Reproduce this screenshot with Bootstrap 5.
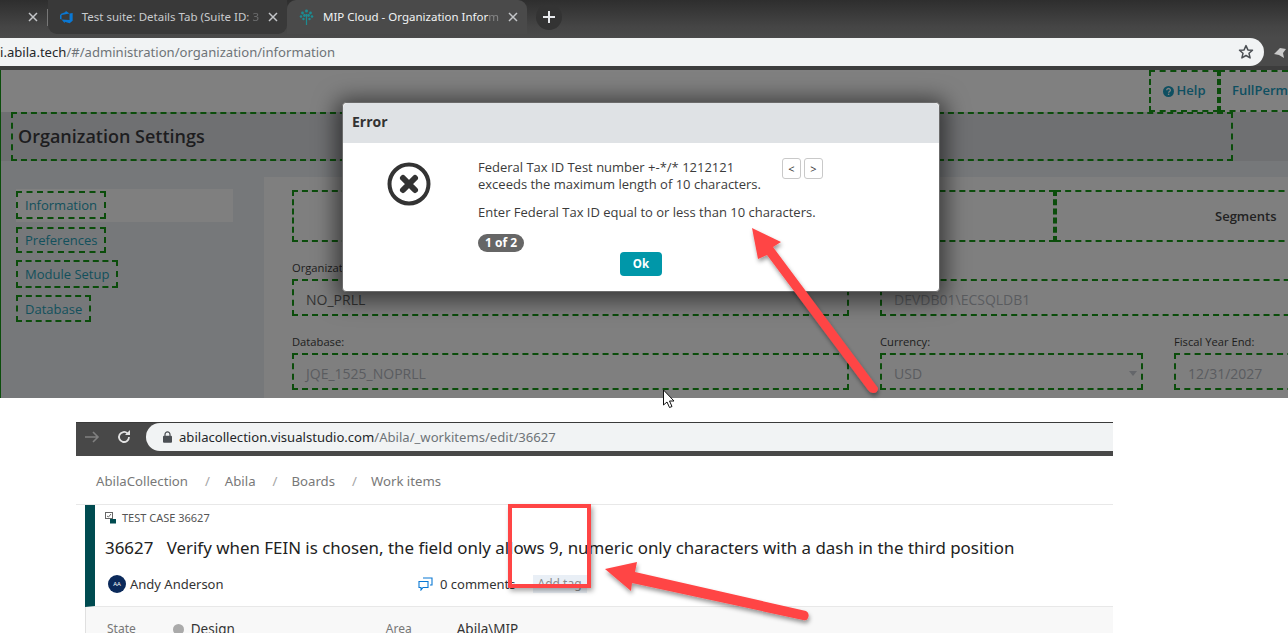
<!DOCTYPE html>
<html lang="en">
<head>
<meta charset="utf-8">
<title>Composite screenshot</title>
<link href="https://cdn.jsdelivr.net/npm/bootstrap@5.3.0/dist/css/bootstrap.min.css" rel="stylesheet">
<style>
html,body{margin:0;background:#fff;width:1288px;height:633px;overflow:hidden}
body{position:relative;font-family:"Open Sans",sans-serif}
.tabstrip{height:38px;background:linear-gradient(#2e2e2e,#454545 70%,#4a4a4a);color:#e8eaed;font:11.5px/1 "Noto Sans",sans-serif}
.tabone{width:48px;height:34px}
.tabtwo{width:239px;height:34px;background:#393939;border-radius:0 0 9px 9px;padding:0 9px 0 12px;gap:9px;color:#c9cbce}
.tabthree{width:240px;height:34px;background:#4a4a4a;border-radius:9px 9px 0 0;padding:0 9px 0 12px;gap:9px;color:#f1f3f4}
.tabtext{flex:1;white-space:nowrap}
.fadechar{opacity:.35}
.closex{width:10px;height:10px;flex:none}
.tabsep{width:1px;height:17px;background:#777;margin-left:auto}
.plusbtn{width:26px;height:26px;border-radius:50%;background:#333;margin-left:9px;flex:none}
.urlrow{height:32px;background:linear-gradient(#4a4a4a 28px,#3d3d3d 28px)}
.urlbar{height:28px;width:1264px;background:#f1f3f4;border-radius:0 14px 14px 0;font:13.1px/28px "Noto Sans",sans-serif;color:#6e7378;white-space:nowrap}
.urlbar b,.url2 b{font-weight:400;color:#24272a}
.starico{width:16px;height:16px;margin-right:10px;flex:none}
.extico{width:14px;height:14px;margin-left:9px;flex:none}
.appwin{height:328px;width:1288px;overflow:hidden;background:#76787a;border-left:1px solid #0b4d0b;color:#222;position:relative}
.bandtop{height:42px;background:#808080}
.bandtitle{height:49px;background:#6f7072;padding-left:10px}
.dash{border:2px dashed #0b4d0b}
.helpbox{width:70px;height:42px;color:#0e4f61;font-size:13px;font-weight:600;gap:3px;flex:none}
.permbox{width:69px;height:42px;color:#0e4f61;font-size:13px;font-weight:600;padding-left:11px;flex:none;border-right:0;white-space:nowrap}
.titlebox{width:1222px;height:49px;font-size:18px;font-weight:600;color:#1d1d1f;padding-left:5px;flex:none}
.sidecol{width:263px;flex:none;padding:28px 0 0 15px}
.sidelink{display:flex;align-items:center;font-size:13px;color:#12505c;padding:2px 0 0 7px;text-decoration:none}
.siderow{width:217px;height:33px;background:#7f7f7f;padding-top:2px;margin-bottom:5px}
.sideplain{margin-bottom:7px}
.panelbox{width:1060px;flex:none;height:240px;margin-top:16px;background:#7f7f7f;padding:13px 0 0 28px}
.paneltabs{height:52px}
.ptab{height:52px;font-size:13px;font-weight:600;color:#222;flex:none;padding-top:1px}
.fieldlabel{font-size:11.2px;line-height:14px;color:#1d1d1d;height:14px;white-space:nowrap}
.fieldbox{height:37px;padding:3px 0 0 12px;font-size:14px;color:#333;white-space:nowrap;flex:none;margin-top:4px}
.dim{color:#5a5c5f}
.rowgap{gap:31px}
.modalcard{position:absolute;left:342px;top:102px;width:598px;height:190px;border:1px solid #6b6b6b;border-radius:4px;box-shadow:0 3px 22px 6px rgba(0,0,0,.55);overflow:hidden;background:#fff;color:#3c3c3c}
.modalhead{height:40px;background:#dfe2e5;border:0;border-radius:0;padding:0 9px;font-size:14px;font-weight:700;line-height:38px;color:#333}
.modaltxt{font-size:13px;line-height:17px;white-space:nowrap;color:#3b3b3b}
.modalicon{width:135px;padding:19px 0 0 44px;flex:none}
.pager{width:19px;height:21px;border:1px solid #c9c9c9;border-radius:3px;font-size:11px;line-height:17px;text-align:center;color:#333;background:#fff;padding:0}
.countpill{background:#666;color:#fff;font-size:12px;font-weight:700;width:46px;height:18px;line-height:18px;padding:0;border-radius:9px}
.okbtn{width:42px;height:24px;background:#0097a9;border:0;border-radius:4px;color:#fff;font-size:11.5px;font-weight:700;padding:0;line-height:24px}
.strip2{margin:24px 0 0 76px;width:1037px;height:34px;background:#484848;border-top:1px solid #3a3a3a}
.navicons{width:70px;flex:none;height:28px}
.url2{flex:1;height:28px;background:#f1f3f4;border-radius:14px 0 0 14px;font:13.1px/28px "Noto Sans",sans-serif;color:#6e7378;padding-left:17px;gap:7px}
.crumbs{margin:0 0 0 96px;height:48px;padding-top:2px;font:13.2px "Noto Sans",sans-serif;color:#787878;width:1017px}
.crumbs .sepmark{color:#a5a5a5}
.itemwrap{margin-left:76px;width:1037px;border-top:1px solid #e8e8e8}
.itemhead{height:102px;margin-left:9px;border-left:10px solid #004b50;position:relative;padding-left:10px;border-bottom:1px solid #e8e8e8}
.casetype{font:11px/14px "Noto Sans",sans-serif;color:#555;padding-top:6px;gap:5px}
.itemtitle{font:16.9px/24px "Noto Sans",sans-serif;color:#222;margin-top:11px;white-space:nowrap}
.itemtitle span{margin-right:9px}
.authorrow{font:13px/18px "Noto Sans",sans-serif;color:#333;margin-top:15px;padding-left:3px;white-space:nowrap}
.avatar{width:18px;height:18px;border-radius:50%;background:#0b2a5b;color:#fff;font-size:6px;line-height:18px;text-align:center;margin-right:4px;flex:none}
.commentico{margin-left:193px;margin-right:7px;flex:none}
.addtag{background:#e9eff6;color:#8a8a8a;font-size:12px;line-height:18px;padding:0 5px;margin-left:17px;width:54px;white-space:nowrap}
.detailrow{height:30px;margin-left:9px;background:#f8f8f8;border-left:1px solid #e0e0e0;font:13.5px/18px "Noto Sans",sans-serif;color:#333;padding:13px 0 0 21px;position:relative}
.detaillabel{font-size:12px;color:#777}
.statedot{width:11px;height:11px;border-radius:50%;background:#aaa;margin:0 7px 0 37px;flex:none}
.overlayart{position:absolute;left:0;top:0;pointer-events:none}
.redframe{position:absolute;left:508px;top:504px;width:83px;height:84px;border:4px solid #ff4545;box-shadow:2px 3px 5px rgba(0,0,0,.35)}
</style>
</head>
<body>

<div class="tabstrip d-flex align-items-start">
  <div class="tabone d-flex align-items-center">
    <svg class="closex" style="margin-left:28px" viewBox="0 0 10 10"><path d="M1 1l8 8M9 1l-8 8" stroke="#c4c6c9" stroke-width="1.5"/></svg>
    <span class="tabsep"></span>
  </div>
  <div class="tabtwo d-flex align-items-center">
    <svg width="16" height="16" viewBox="0 0 24 24" class="flex-none"><path fill="#0a78d4" d="M0 8.877L2.247 5.91l8.405-3.416V.022l7.37 5.393L2.966 8.338v8.225L0 15.707zm24-4.45v14.651l-5.753 4.9-9.303-3.057v3.056l-5.978-7.416 15.057 1.184V5.415z"/></svg>
    <span class="tabtext">Test suite: Details Tab (Suite ID: <span class="fadechar">3</span></span>
    <svg class="closex" viewBox="0 0 10 10"><path d="M1 1l8 8M9 1l-8 8" stroke="#c4c6c9" stroke-width="1.5"/></svg>
  </div>
  <div class="tabthree d-flex align-items-center">
    <svg width="15" height="18" viewBox="0 0 15 18"><g fill="#1c8c92"><circle cx="7.5" cy="3" r="1.5"/><circle cx="3.5" cy="5" r="1.4"/><circle cx="11.5" cy="5" r="1.4"/><circle cx="2" cy="8.5" r="1.3"/><circle cx="13" cy="8.5" r="1.3"/><circle cx="5.5" cy="7.5" r="1.4"/><circle cx="9.5" cy="7.5" r="1.4"/><circle cx="4.5" cy="11" r="1.2"/><circle cx="10.5" cy="11" r="1.2"/></g><path d="M7.5 6v11" stroke="#1c8c92" stroke-width="1.2"/></svg>
    <span class="tabtext">MIP Cloud - Organization Infor<span class="fadechar">m</span></span>
    <svg class="closex" viewBox="0 0 10 10"><path d="M1 1l8 8M9 1l-8 8" stroke="#c4c6c9" stroke-width="1.5"/></svg>
  </div>
  <div class="plusbtn d-flex align-items-center justify-content-center mt-1">
    <svg width="12" height="12" viewBox="0 0 12 12"><path d="M6 0v12M0 6h12" stroke="#e8eaed" stroke-width="2"/></svg>
  </div>
</div>

<div class="urlrow d-flex">
  <div class="urlbar d-flex align-items-center justify-content-between"><span><b>i.abila.tech</b>/#/administration/organization/information</span>
    <svg class="starico" viewBox="0 0 16 16"><path d="M8 1.6l1.9 4.3 4.6.4-3.5 3 1.1 4.6L8 11.5l-4.1 2.4L5 9.3l-3.5-3 4.6-.4z" fill="none" stroke="#4b4f54" stroke-width="1.5" stroke-linejoin="round"/></svg>
  </div>
  <svg class="extico mt-2" viewBox="0 0 14 14"><path d="M1 8l6-6 6 1-3 4 1 5-5-3z" fill="#c9c9c9"/></svg>
</div>

<div class="appwin">
  <div class="bandtop d-flex justify-content-end">
    <div class="dash helpbox d-flex align-items-center justify-content-center">
      <svg width="11" height="11" viewBox="0 0 11 11"><circle cx="5.5" cy="5.5" r="5.5" fill="#0e4f61"/><path d="M3.7 4.2c0-2.3 3.7-2.3 3.7 0 0 1.3-1.8 1.2-1.8 2.5" fill="none" stroke="#808080" stroke-width="1.3"/><rect x="4.9" y="7.6" width="1.4" height="1.4" fill="#808080"/></svg>
      <span>Help</span>
    </div>
    <div class="dash permbox d-flex align-items-center">FullPerm</div>
  </div>
  <div class="bandtitle">
    <div class="dash titlebox d-flex align-items-center">Organization Settings</div>
  </div>
  <div class="d-flex">
    <nav class="sidecol">
      <div class="siderow"><a class="sidelink dash" style="width:90px;height:28px" href="#">Information</a></div>
      <a class="sidelink dash sideplain" style="width:90px;height:26px" href="#">Preferences</a>
      <a class="sidelink dash sideplain" style="width:102px;height:28px" href="#">Module Setup</a>
      <a class="sidelink dash" style="width:75px;height:27px" href="#">Database</a>
    </nav>
    <section class="panelbox">
      <div class="paneltabs d-flex">
        <div class="dash ptab" style="width:763px"></div>
        <div class="dash ptab d-flex align-items-center" style="width:260px;padding-left:158px">Segments</div>
      </div>
      <div class="fieldlabel" style="margin-top:19px">Organization Name:</div>
      <div class="d-flex rowgap">
        <div class="dash fieldbox d-flex align-items-center" style="width:557px">NO_PRLL</div>
        <div class="dash fieldbox d-flex align-items-center dim" style="width:440px">DEVDB01\ECSQLDB1</div>
      </div>
      <div class="d-flex rowgap" style="margin-top:19px">
        <div style="width:557px" class="flex-none">
          <div class="fieldlabel">Database:</div>
          <div class="dash fieldbox d-flex align-items-center dim">JQE_1525_NOPRLL</div>
        </div>
        <div style="width:263px" class="flex-none">
          <div class="fieldlabel">Currency:</div>
          <div class="dash fieldbox d-flex align-items-center justify-content-between dim"><span>USD</span><svg width="8" height="5" class="me-1" viewBox="0 0 8 5"><path d="M0 0h8L4 5z" fill="#64666a"/></svg></div>
        </div>
        <div style="width:140px" class="flex-none">
          <div class="fieldlabel">Fiscal Year End:</div>
          <div class="dash fieldbox d-flex align-items-center dim">12/31/2027</div>
        </div>
      </div>
    </section>
  </div>
</div>

<div class="card modalcard">
  <div class="card-header modalhead">Error</div>
  <div class="d-flex">
    <div class="modalicon">
      <svg width="44" height="44" viewBox="0 0 44 44"><circle cx="22" cy="22" r="19.500" fill="none" stroke="#333" stroke-width="4"/><path d="M16 16l12 12M28 16l-12 12" stroke="#333" stroke-width="6" stroke-linecap="round"/></svg>
    </div>
    <div class="flex-grow-1" style="padding-top:16px">
      <div class="d-flex modaltxt">
        <div style="width:304px">Federal Tax ID Test number +-*/* 1212121<br>exceeds the maximum length of 10 characters.</div>
        <div class="d-flex" style="gap:3px;margin-top:-1px"><button class="btn pager">&lt;</button><button class="btn pager">&gt;</button></div>
      </div>
      <p class="modaltxt mb-0" style="margin-top:11px">Enter Federal Tax ID equal to or less than 10 characters.</p>
      <span class="badge countpill" style="margin-top:13px">1 of 2</span>
    </div>
  </div>
  <div class="text-center" style="margin-top:-3px"><button class="btn okbtn">Ok</button></div>
</div>

<div class="strip2 d-flex">
  <div class="navicons d-flex align-items-center">
    <svg width="16" height="14" class="ms-2" viewBox="0 0 16 14"><path d="M1 7h13M9 2l5 5-5 5" fill="none" stroke="#808080" stroke-width="1.6"/></svg>
    <svg width="16" height="16" style="margin-left:16px" viewBox="0 0 16 16"><path d="M13 8a5 5 0 1 1-1.500-3.600" fill="none" stroke="#e3e3e3" stroke-width="1.800"/><path d="M14 1v5H9z" fill="#e3e3e3"/></svg>
  </div>
  <div class="url2 d-flex align-items-center">
    <svg width="9" height="12" class="flex-none" viewBox="0 0 9 12"><path d="M2 5V3.400a2.500 2.500 0 0 1 5 0V5" fill="none" stroke="#4b4f54" stroke-width="1.200"/><rect y="4.800" width="9" height="7" rx="1" fill="#4b4f54"/></svg>
    <span><b>abilacollection.visualstudio.com</b>/Abila/_workitems/edit/36627</span>
  </div>
</div>

<div class="crumbs d-flex align-items-center">
  <span>AbilaCollection</span><span class="sepmark" style="margin:0 15px 0 17px">/</span>
  <span>Abila</span><span class="sepmark" style="margin:0 14px 0 17px">/</span>
  <span>Boards</span><span class="sepmark" style="margin:0 14px 0 17px">/</span>
  <span>Work items</span>
</div>

<div class="itemwrap">
  <div class="itemhead">
    <div class="casetype d-flex align-items-center">
      <svg width="12" height="12" viewBox="0 0 12 12"><rect x=".5" y=".5" width="7" height="6" fill="none" stroke="#666"/><path d="M2 4l1.500 1L6 2" fill="none" stroke="#666"/><rect x="5" y="7" width="6" height="4.500" fill="#004b50"/></svg>
      <span>TEST CASE 36627</span>
    </div>
    <div class="itemtitle"><span>36627</span> Verify when FEIN is chosen, the field only allows 9, numeric only characters with a dash in the third position</div>
    <div class="authorrow d-flex align-items-center">
      <span class="avatar">AA</span><span style="width:95px" class="flex-none">Andy Anderson</span>
      <svg class="commentico" width="15" height="14" viewBox="0 0 15 14"><path d="M5 1h9v7h-2M1 4.500h9v6H5l-2 2.500v-2.500H1z" fill="none" stroke="#0a78d4" stroke-width="1.100"/></svg>
      <span>0 comments</span><span class="addtag">Add tag</span>
    </div>
  </div>
  <div class="detailrow d-flex align-items-start">
    <span class="detaillabel">State</span><span class="statedot mt-1"></span><span>Design</span>
    <span class="detaillabel" style="margin-left:151px">Area</span><span style="margin-left:45px">Abila\MIP</span>
  </div>
</div>

<div class="redframe"></div>

<svg class="overlayart" width="1288" height="633" viewBox="0 0 1288 633">
  <defs><filter id="softshadow" x="-20%" y="-20%" width="140%" height="140%"><feDropShadow dx="1" dy="3" stdDeviation="2" flood-color="#000" flood-opacity=".4"/></filter></defs>
  <path filter="url(#softshadow)" fill="#ff4545" d="M752 228L781 242L773 247L878 388Q878 393 873 393Q870 393 868 390L767 255L758 259Z"/>
  <path filter="url(#softshadow)" fill="#ff4545" d="M605 569L637 562L635 572L806 611Q810 613 808 618Q807 621 803 620L632 583L631 591Z"/>
  <path fill="#fff" stroke="#111" stroke-width="1" d="M663.500 390v15l3.500-3 2.500 5.500 2.500-1-2.500-5.500h4.500z"/>
</svg>

</body>
</html>
